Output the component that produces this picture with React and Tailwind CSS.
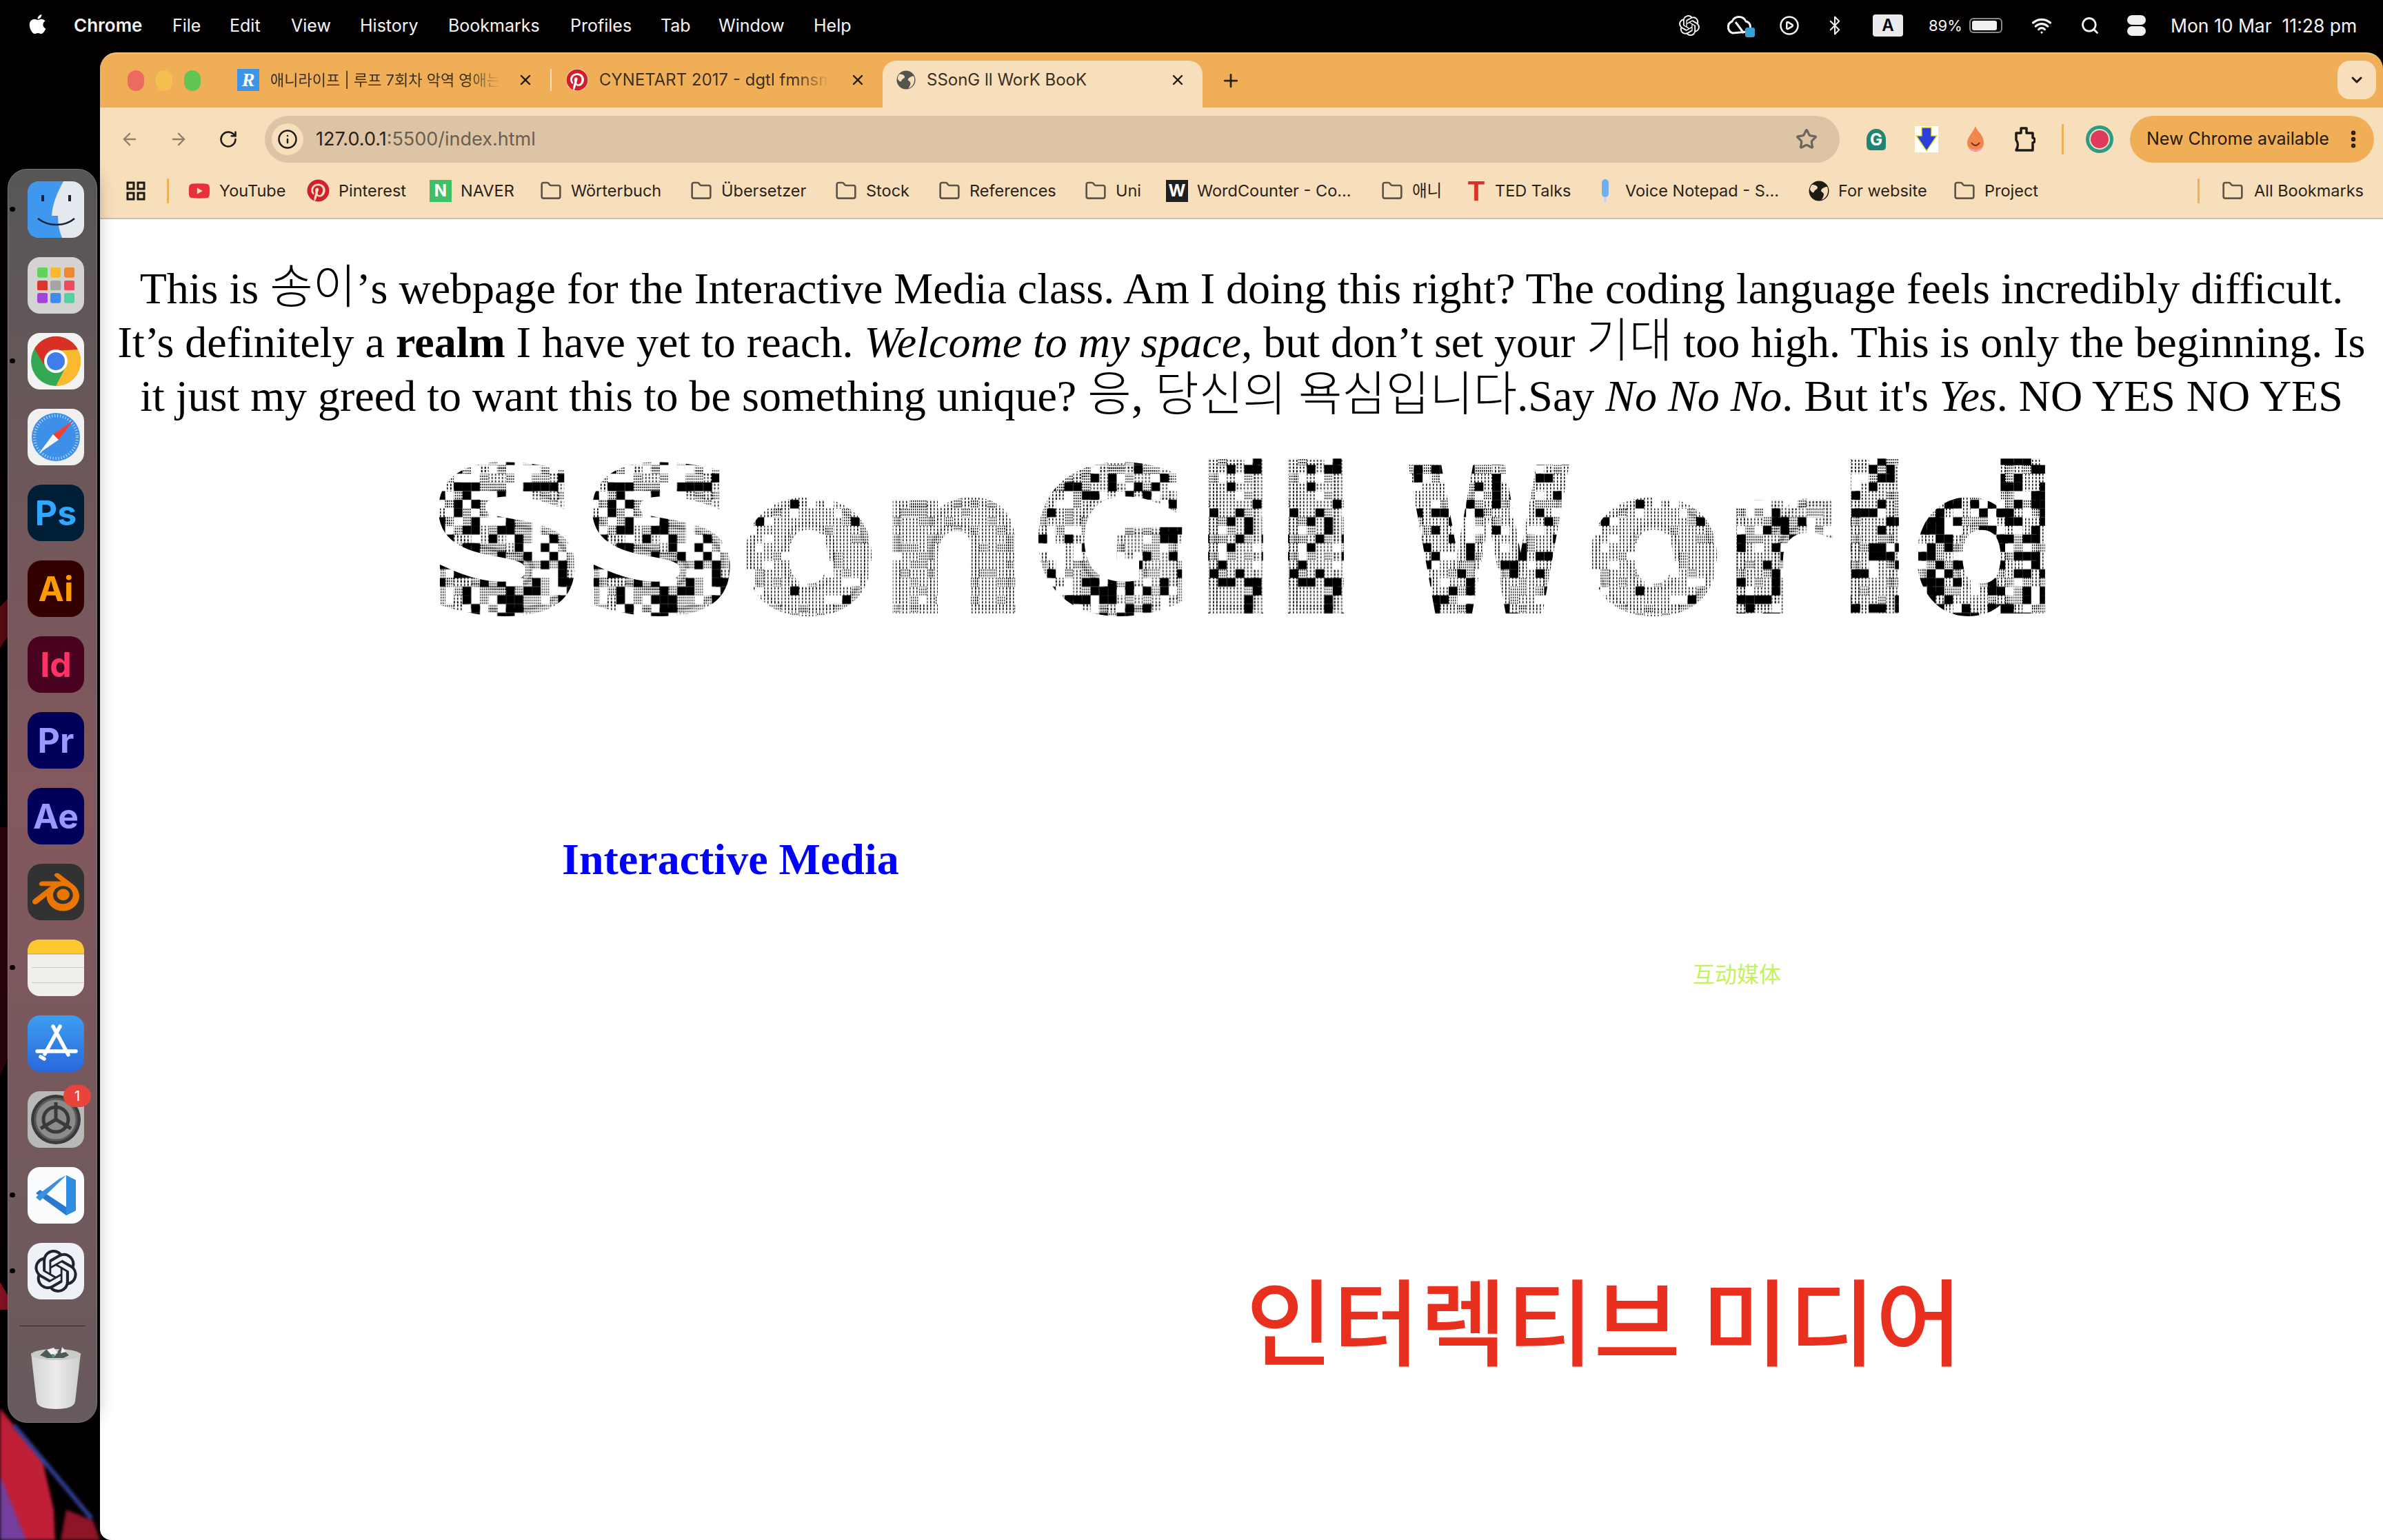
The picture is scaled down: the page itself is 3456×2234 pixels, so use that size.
import React from 'react';
import {
    ArrowLeft, ArrowRight, RotateCw, Info, Star, Plus, X, ChevronDown,
    EllipsisVertical, Folder, Search, Wifi, Bluetooth, CirclePlay
} from 'lucide-react';
import { FaApple, FaPinterest, FaYoutube } from 'react-icons/fa';
import { SiOpenai, SiBlender } from 'react-icons/si';

const LOGO_CELL = 12.6;
const LOGO_FONT = 280;
const LOGO_STROKE = 12;
const GLYPHS = {
    S: { adv: 0.72, from: 0.06, to: 0.66 },
    o: { adv: 0.687, from: 0.05, to: 0.637 },
    n: { adv: 0.712, from: 0.08, to: 0.637 },
    G: { adv: 0.821, from: 0.05, to: 0.75 },
    l: { adv: 0.343, from: 0.084, to: 0.259 },
    W: { adv: 1.103, from: 0.01, to: 1.09 },
    r: { adv: 0.493, from: 0.084, to: 0.5 },
    d: { adv: 0.716, from: 0.05, to: 0.63 },
};

// x, w are measured on the screenshot; mix = black, gray, dotted share of cells
const LOGO = [
    { ch: 'S', x: 488, w: 204, seed: 11, mix: [0.3, 0.32, 0.1] },
    { ch: 'S', x: 711, w: 206, seed: 11, mix: [0.3, 0.32, 0.1] },
    { ch: 'o', x: 938, w: 179, seed: 23, mix: [0.05, 0.14, 0.62] },
    { ch: 'n', x: 1149, w: 179, seed: 31, mix: [0, 0.25, 0.73] },
    { ch: 'G', x: 1361, w: 209, seed: 47, mix: [0.22, 0.2, 0.35] },
    { ch: 'l', x: 1609, w: 76, seed: 53, mix: [0.2, 0.18, 0.55] },
    { ch: 'l', x: 1725, w: 77, seed: 53, mix: [0.2, 0.18, 0.55] },
    { ch: 'W', x: 1893, w: 242, seed: 61, mix: [0.22, 0.16, 0.46] },
    { ch: 'o', x: 2164, w: 179, seed: 23, mix: [0.05, 0.14, 0.62] },
    { ch: 'r', x: 2374, w: 141, seed: 71, mix: [0.22, 0.2, 0.45] },
    { ch: 'l', x: 2540, w: 68, seed: 79, mix: [0.25, 0.2, 0.47] },
    { ch: 'd', x: 2637, w: 183, seed: 83, mix: [0.42, 0.16, 0.26] },
];

const logoCells = ({ seed, mix, w }) => {
    let s = seed * 7919;
    const next = () => {
        s = (s * 1664525 + 1013904223) % 4294967296;
        return s / 4294967296;
    };
    const cells = [];
    const cols = Math.ceil(w / LOGO_CELL);
    for (let row = 0; row < 19; row++) {
        for (let col = 0; col < cols; col++) {
            const r = next();
            const fill = r < mix[0] ? '#000' : r < mix[0] + mix[1] ? 'url(#logo-gray)' : r < mix[0] + mix[1] + mix[2] ? 'url(#logo-dots)' : null;
            if (fill) cells.push({ col, row, fill });
        }
    }
    return { cells, cols };
};

const Logo = () => (
    <svg className="block w-[3311px] h-[250px] mt-[48px]" viewBox="0 0 3311 250">
        <defs>
            <pattern id="logo-gray" width="3" height="4" patternUnits="userSpaceOnUse">
                <rect width="1.5" height="2" fill="#000" />
            </pattern>
            <pattern id="logo-dots" width="5" height="5" patternUnits="userSpaceOnUse">
                <rect width="1.5" height="3" fill="#000" />
            </pattern>
            {LOGO.map((l, i) => {
                const { cells, cols } = logoCells(l);
                return (
                    <pattern key={i} id={`logo-${i}`} x={l.x} y="0" width={cols * LOGO_CELL} height={19 * LOGO_CELL} patternUnits="userSpaceOnUse">
                        {cells.map((c) => (
                            <rect key={`${c.col}-${c.row}`} x={c.col * LOGO_CELL} y={c.row * LOGO_CELL} width={LOGO_CELL} height={LOGO_CELL} fill={c.fill} />
                        ))}
                    </pattern>
                );
            })}
        </defs>
        {LOGO.map((l, i) => {
            const g = GLYPHS[l.ch];
            const inner = l.w - LOGO_STROKE;
            const scale = inner / ((g.to - g.from) * LOGO_FONT);
            return (
                <text
                    key={i}
                    x={l.x + LOGO_STROKE / 2 - g.from * LOGO_FONT * scale}
                    y="222"
                    fontFamily="'DejaVu Sans', sans-serif"
                    fontWeight="700"
                    fontSize={LOGO_FONT}
                    textLength={g.adv * LOGO_FONT * scale}
                    lengthAdjust="spacingAndGlyphs"
                    fill={`url(#logo-${i})`}
                    stroke={`url(#logo-${i})`}
                    strokeWidth={LOGO_STROKE}
                >
                    {l.ch}
                </text>
            );
        })}
    </svg>
);

const Wallpaper = () => (
    <svg className="absolute inset-0 w-full h-full" viewBox="0 0 3456 2234">
        <rect width="3456" height="2234" fill="#030002" />
        <path d="M0 880 C10 870 20 860 34 850 L34 900 C20 910 10 925 0 940 Z" fill="#5a0c16" />
        <path d="M0 1200 L32 1200 L28 1500 L0 1560 Z" fill="#2c060c" />
        <path d="M0 1860 L12 1880 L12 1900 L0 1900 Z" fill="#8a1224" />
        <g className="blur-[2px]">
            <path d="M0 2043 L20 2067 L62 2120 L78 2190 L80 2234 L0 2234 Z" fill="#c01f38" />
            <path d="M88 2234 L96 2190 L135 2206 L145 2234 Z" fill="#8c1528" />
            <path d="M20 2067 L133 2203" stroke="#2f3f96" strokeWidth="6" />
            <path d="M0 2140 L38 2234 L0 2234 Z" fill="#743f9c" />
        </g>
    </svg>
);

const BrandIcon = ({ bg, color, children }) => (
    <div className={`w-[82px] h-[82px] rounded-[20px] flex items-center justify-center font-['Inter'] font-bold text-[50px] leading-none ${bg} ${color}`}>
        {children}
    </div>
);

const Finder = () => (
    <svg width="82" height="82" viewBox="0 0 82 82">
        <rect width="82" height="82" rx="18" fill="#e4e8ef" />
        <path d="M18 0 H52 C42 18 36 34 35 50 H44 C44 62 46 72 50 82 H18 Q0 82 0 64 V18 Q0 0 18 0Z" fill="#3f98ee" />
        <rect x="20" y="20" width="4" height="9" fill="#17233a" />
        <rect x="59" y="20" width="4" height="9" fill="#17233a" />
        <path d="M15 54 C30 66 54 66 68 54" stroke="#17233a" strokeWidth="2.5" fill="none" />
    </svg>
);

const Launchpad = () => {
    const dots = ['#5fd35b', '#f8b92f', '#ef8a2c', '#d9372d', '#a5a5a5', '#ef4a5f', '#a045d8', '#3f8cf0', '#4fd3a3'];
    return (
        <div className="w-[82px] h-[82px] rounded-[18px] bg-[#d5d3d1] grid grid-cols-3 gap-[4px] p-[14px] py-[15px]">
            {dots.map((c) => (
                <svg key={c} viewBox="0 0 16 14" preserveAspectRatio="none" className="w-full h-full">
                    <rect width="16" height="14" rx="3" fill={c} />
                </svg>
            ))}
        </div>
    );
};

const ChromeApp = () => (
    <svg width="82" height="82" viewBox="0 0 82 82">
        <rect width="82" height="82" rx="18" fill="#f2f2f2" />
        <ellipse cx="41" cy="41" rx="36" ry="36" fill="#34a853" />
        <path d="M41 5 A36 36 0 0 0 10 23 L23 45 L41 26 L73 24 A36 36 0 0 0 41 5Z" fill="#d93025" />
        <path d="M73 24 A36 36 0 0 1 41 77 L55 50 L41 26Z" fill="#f9bb2d" />
        <circle cx="41" cy="41" r="17" fill="#fff" />
        <circle cx="41" cy="41" r="13" fill="#3f7de8" />
    </svg>
);

const Safari = () => (
    <svg width="82" height="82" viewBox="0 0 82 82">
        <rect width="82" height="82" rx="18" fill="#f0f0f0" />
        <circle cx="41" cy="41" r="35" fill="#3d8fe8" />
        <circle cx="41" cy="41" r="31" fill="none" stroke="#cfe4fa" strokeWidth="4" strokeDasharray="1 3" />
        <path d="M66 17 L45 45 L37 37Z" fill="#ef4135" />
        <path d="M16 65 L37 37 L45 45Z" fill="#f5f5f5" />
    </svg>
);

const Notes = () => (
    <svg width="82" height="82" viewBox="0 0 82 82">
        <rect width="82" height="82" rx="18" fill="#f1efeb" />
        <path d="M0 20 V18 Q0 0 18 0 H64 Q82 0 82 18 V20Z" fill="#fbc92f" />
        <rect y="20" width="82" height="1.5" fill="#b5b0a4" />
        <rect x="6" y="40" width="76" height="1" fill="#cfcbc2" />
        <rect x="6" y="62" width="76" height="1" fill="#cfcbc2" />
    </svg>
);

const AppStore = () => (
    <svg width="82" height="82" viewBox="0 0 82 82">
        <defs>
            <linearGradient id="store-bg" x1="0" y1="0" x2="0" y2="1">
                <stop offset="0" stopColor="#3d9df0" />
                <stop offset="1" stopColor="#2a68dc" />
            </linearGradient>
        </defs>
        <rect width="82" height="82" rx="18" fill="url(#store-bg)" />
        <g stroke="#fff" strokeWidth="5.5" strokeLinecap="round" fill="none">
            <path d="M37 16 L59 57 M47 16 L25 56 M14 52 H70 M24 63 L19 60" />
        </g>
    </svg>
);

const Settings = () => (
    <div className="relative w-[82px] h-[82px]">
        <svg width="82" height="82" viewBox="0 0 82 82">
            <rect width="82" height="82" rx="18" fill="#b9b9b9" />
            <circle cx="41" cy="41" r="36" fill="#3a3a3a" />
            <circle cx="41" cy="41" r="30" fill="#8b8b8b" stroke="#5a5a5a" strokeWidth="3" />
            <circle cx="41" cy="41" r="18" fill="none" stroke="#3a3a3a" strokeWidth="5" />
            <path d="M41 41 V16 M41 41 L19 54 M41 41 L63 54" stroke="#3a3a3a" strokeWidth="5" />
        </svg>
        <span className="absolute -top-[9px] -right-[10px] w-[40px] h-[32px] rounded-full bg-[#e8443a] text-white text-[20px] font-['Inter'] flex items-center justify-center">1</span>
    </div>
);

const VSCode = () => (
    <svg width="82" height="82" viewBox="0 0 82 82">
        <rect width="82" height="82" rx="18" fill="#fbfcfe" />
        <path d="M56 12 L70 19 V63 L56 70 L12 38 L18 33 L56 58Z" fill="#2a79cf" />
        <path d="M56 12 L18 49 L12 44 L18 38 L46 17 Z" fill="#3b8fe0" />
        <path d="M56 12 L70 19 V63 L56 70Z" fill="#2f8ce0" />
    </svg>
);

const Trash = () => (
    <svg width="74" height="94" viewBox="0 0 74 94">
        <defs>
            <linearGradient id="trash-glass" x1="0" y1="0" x2="1" y2="0">
                <stop offset="0" stopColor="#d2d2d2" />
                <stop offset="0.5" stopColor="#ececec" />
                <stop offset="1" stopColor="#cdcdcd" />
            </linearGradient>
        </defs>
        <path d="M1 12 L73 12 L65 82 Q63 93 37 93 Q11 93 9 82Z" fill="url(#trash-glass)" />
        <ellipse cx="37" cy="14" rx="36" ry="8" fill="#c8cbc8" />
        <path d="M14 15 L24 6 L36 16 L44 3 L56 15 L48 19 L24 19Z" fill="#4e5a55" />
        <path d="M24 7 L34 4 L40 12 L30 14Z M46 3 L52 10 L44 12Z" fill="#f0f0f0" />
        <path d="M30 14 L36 16 L33 19Z" fill="#3fa088" />
    </svg>
);

const Earth = ({ className }) => (
    <svg className={className} viewBox="0 0 30 30">
        <circle cx="15" cy="15" r="14.5" fill="currentColor" />
        <path d="M5 6 C9 6 12 7 13 10 C13 13 9 13 8 16 C7 19 4 17 2 13 C2 10 3 8 5 6Z" fill="#f8dfbb" />
        <path d="M27 9 C24 9 19 11 18 14 C18 17 22 17 22 20 C22 23 20 25 19 28 C24 26 28 21 28 15 C28 13 28 11 27 9Z" fill="#f8dfbb" />
    </svg>
);

const DOCK = [
    { name: 'finder', icon: <Finder />, running: true },
    { name: 'launchpad', icon: <Launchpad /> },
    { name: 'chrome', icon: <ChromeApp />, running: true },
    { name: 'safari', icon: <Safari /> },
    { name: 'ps', icon: <BrandIcon bg="bg-[#001e36]" color="text-[#31a8ff]">Ps</BrandIcon> },
    { name: 'ai', icon: <BrandIcon bg="bg-[#330000]" color="text-[#ff9a00]">Ai</BrandIcon> },
    { name: 'id', icon: <BrandIcon bg="bg-[#49021f]" color="text-[#ff3366]">Id</BrandIcon> },
    { name: 'pr', icon: <BrandIcon bg="bg-[#00005b]" color="text-[#9999ff]">Pr</BrandIcon> },
    { name: 'ae', icon: <BrandIcon bg="bg-[#00005b]" color="text-[#9999ff]">Ae</BrandIcon> },
    { name: 'blender', icon: <BrandIcon bg="bg-[#323232]" color="text-[#ea7600]"><SiBlender className="w-[68px] h-[68px]" /></BrandIcon> },
    { name: 'notes', icon: <Notes />, running: true },
    { name: 'store', icon: <AppStore /> },
    { name: 'settings', icon: <Settings /> },
    { name: 'vscode', icon: <VSCode />, running: true },
    { name: 'gpt', icon: <BrandIcon bg="bg-[#eef1f6]" color="text-[#1f2430]"><SiOpenai className="w-[62px] h-[62px]" /></BrandIcon>, running: true },
];

const Dock = () => (
    <aside className="relative z-10 w-[145px] shrink-0 pt-[169px] pl-[11px]">
        <div className="relative w-[130px] h-[1819px] rounded-[28px] border border-[#7d7578] bg-gradient-to-b from-[#565656] via-[#84585e] to-[#665a5c] shadow-[0_0_24px_rgba(0,0,0,0.3)] flex flex-col items-center pl-[10px] pt-[17px] gap-[28px]">
            {DOCK.map(({ name, icon, running }) => (
                <div key={name} className="relative">
                    {icon}
                    {running && <span className="absolute left-[-26px] top-[37px] w-[8px] h-[7px] rounded-full bg-black" />}
                </div>
            ))}
            <div className="w-[96px] h-[1px] bg-[#4a1a20] mt-[10px] -ml-[10px] -mb-[1px]" />
            <Trash />
        </div>
    </aside>
);

const MenuBar = () => (
    <header className="relative z-10 h-[76px] flex items-start pt-[22px] text-[#f4f4f4] font-['Inter'] text-[25px] leading-[30px]">
        <FaApple className="ml-[40px] w-[29px] h-[32px] -mt-[3px] text-white" />
        <span className="ml-[38px] w-[143px] text-[26px] font-semibold">Chrome</span>
        <nav className="flex">
            <span className="w-[83px]">File</span>
            <span className="w-[89px]">Edit</span>
            <span className="w-[100px]">View</span>
            <span className="w-[128px]">History</span>
            <span className="w-[177px]">Bookmarks</span>
            <span className="w-[131px]">Profiles</span>
            <span className="w-[84px]">Tab</span>
            <span className="w-[138px]">Window</span>
            <span>Help</span>
        </nav>
        <div className="ml-auto flex items-center h-[30px]">
            <SiOpenai className="w-[30px] h-[30px] mr-[38px]" />
            <div className="relative w-[40px] mr-[37px]">
                <svg width="40" height="30" viewBox="0 0 40 30" fill="none" stroke="#f4f4f4" strokeWidth="3">
                    <path d="M10 26 A9 9 0 0 1 9 9 A11 11 0 0 1 29 9 A8 8 0 0 1 31 24 Z" />
                    <path d="M14 10 L26 26" />
                </svg>
                <span className="absolute right-[-2px] bottom-[-2px] w-[14px] h-[14px] bg-[#3aa0d8] rounded-[3px]" />
            </div>
            <CirclePlay className="w-[30px] h-[30px] mr-[36px]" strokeWidth={2} />
            <Bluetooth className="w-[30px] h-[30px] mr-[40px]" strokeWidth={1.6} />
            <span className="w-[44px] h-[32px] rounded-[4px] bg-[#ebebef] text-black font-semibold text-[24px] flex items-center justify-center mr-[37px]">A</span>
            <span className="w-[59px] text-[22px]">89%</span>
            <span className="relative w-[48px] h-[22px] rounded-[6px] border-2 border-[#8a8a8a] p-[2px] mr-[40px]">
                <span className="block w-[36px] h-full rounded-[3px] bg-[#f0f0f0]" />
            </span>
            <Wifi className="w-[34px] h-[30px] mr-[39px]" strokeWidth={2.6} />
            <Search className="w-[28px] h-[28px] mr-[40px]" strokeWidth={2.4} />
            <span className="flex flex-col gap-[2px] mr-[36px]">
                <span className="w-[27px] h-[14px] rounded-full bg-[#f0f0f0]" />
                <span className="w-[27px] h-[14px] rounded-full bg-[#f0f0f0]" />
            </span>
            <span className="w-[274px] mr-[34px] text-[26.5px] whitespace-pre">Mon 10 Mar  11:28 pm</span>
        </div>
    </header>
);

const Tab = ({ icon, title, width, active, fade, textSize = 'text-[24px]' }) => (
    <div className={`relative h-[68px] flex items-center shrink-0 pb-[12px] ${width} ${active ? 'bg-[#f8dfbb] rounded-t-[20px]' : ''}`}>
        {icon}
        <span className={`ml-[16px] whitespace-nowrap overflow-hidden text-[#3a2f20] ${textSize} ${fade ? 'w-[334px] [mask-image:linear-gradient(to_right,black_85%,transparent)]' : 'w-[358px]'}`}>
            {title}
        </span>
        <X className="absolute right-[24px] top-[16px] w-[24px] h-[24px] text-[#1e1a14]" strokeWidth={2.4} />
    </div>
);

const TabStrip = () => (
    <div className="h-[80px] bg-[#f0ae56] border-t-2 border-[#f7c27c] rounded-tl-[24px] rounded-tr-[24px] flex pt-[10px] shrink-0">
        <div className="flex items-center gap-[17px] pl-[40px] w-[181px] h-[58px] shrink-0">
            <span className="w-[24px] h-[30px] rounded-full bg-[#ec6a5e]" />
            <span className="w-[24px] h-[30px] rounded-full bg-[#f4bf4f]" />
            <span className="w-[24px] h-[30px] rounded-full bg-[#61c554]" />
        </div>
        <Tab
            width="w-[472px] pl-[18px]"
            fade
            textSize="text-[22px]"
            icon={<span className="w-[32px] h-[32px] shrink-0 bg-[#3d95e8] text-white italic font-['Liberation_Serif'] font-bold text-[28px] flex items-center justify-center">R</span>}
            title="애니라이프 | 루프 7회차 악역 영애는 다시 시작"
        />
        <span className="w-[2px] h-[32px] mt-[12px] bg-[#f8dfbb]" />
        <Tab
            width="w-[480px] pl-[21px]"
            fade
            icon={<FaPinterest className="w-[32px] h-[32px] shrink-0 text-[#d11f2b] bg-white rounded-full" />}
            title="CYNETART 2017 - dgtl fmnsm and more"
        />
        <Tab
            width="w-[464px] pl-[20px]"
            active
            icon={<Earth className="w-[28px] h-[28px] shrink-0 text-[#55544f]" />}
            title="SSonG ll WorK BooK"
        />
        <Plus className="ml-[26px] mt-[14px] w-[30px] h-[30px] text-[#2a2014]" strokeWidth={2.2} />
        <div className="ml-auto mr-[10px] w-[56px] h-[56px] rounded-[18px] bg-[#f8dfbb] flex items-center justify-center">
            <ChevronDown className="w-[24px] h-[24px] text-[#1e1a14]" strokeWidth={3} />
        </div>
    </div>
);

const Toolbar = () => (
    <div className="h-[84px] bg-[#f8dfbb] flex items-center shrink-0 pt-[8px] font-['Inter']">
        <ArrowLeft className="ml-[29px] w-[28px] h-[28px] text-[#8d7f6c]" strokeWidth={2} />
        <ArrowRight className="ml-[43px] w-[28px] h-[28px] text-[#8d7f6c]" strokeWidth={2} />
        <RotateCw className="ml-[44px] w-[28px] h-[28px] text-[#1e1a14]" strokeWidth={2.2} />
        <div className="ml-[39px] w-[2284px] h-[68px] rounded-full bg-[#ddc4a5] flex items-center pl-[10px] pr-[32px]">
            <span className="w-[46px] h-[46px] rounded-full bg-[#f8dfbb] flex items-center justify-center">
                <Info className="w-[30px] h-[30px] text-[#1e1a14]" strokeWidth={2} />
            </span>
            <span className="ml-[18px] text-[27px] text-[#2a2218]">127.0.0.1<span className="text-[#6a5f50]">:5500/index.html</span></span>
            <Star className="ml-auto w-[32px] h-[32px] text-[#6b655c]" strokeWidth={2.4} />
        </div>
        <svg className="ml-[37px]" width="32" height="36" viewBox="0 0 32 36">
            <path d="M2 18 A14 15 0 0 1 30 18 V29 Q30 34 24 34 H8 Q2 34 2 26Z" fill="#1f8570" />
            <text x="16" y="27" textAnchor="middle" fontFamily="Inter" fontWeight="700" fontSize="24" fill="#fff">G</text>
        </svg>
        <svg className="ml-[40px]" width="34" height="38" viewBox="0 0 34 38">
            <rect width="34" height="38" fill="#fff" />
            <path d="M10 2 H24 V14 H32 L17 36 L2 14 H10Z" fill="#2b3fd8" stroke="#e8e020" strokeWidth="1.5" />
        </svg>
        <svg className="ml-[40px]" width="28" height="38" viewBox="0 0 28 38">
            <path d="M14 0 C16 8 26 12 26 24 A12 13 0 0 1 2 24 C2 16 10 10 14 0Z" fill="#f0864a" />
            <path d="M3 28 A12 10 0 0 0 25 28 L20 36 H8Z" fill="#eea0b8" />
            <path d="M8 24 Q14 32 20 24" stroke="#7a2a20" strokeWidth="2" fill="none" />
        </svg>
        <svg className="ml-[41px]" width="32" height="38" viewBox="0 0 32 38" fill="none" stroke="#1e1a14" strokeWidth="3.5" strokeLinejoin="round">
            <path d="M4 10 H11 V3 H19 V10 H28 V17 C32 17 32 24 28 24 V35 H4 C7 30 7 24 4 20 Z" />
        </svg>
        <span className="ml-[38px] w-[3px] h-[44px] bg-[#f0ae56]" />
        <svg className="ml-[32px]" width="40" height="40" viewBox="0 0 40 40">
            <circle cx="20" cy="20" r="20" fill="#2e9a83" />
            <circle cx="20" cy="20" r="15" fill="#dbe8c8" />
            <circle cx="20" cy="20" r="13" fill="#e03a5c" />
        </svg>
        <div className="ml-[24px] w-[354px] h-[68px] rounded-full bg-[#f0ae56] flex items-center pl-[24px] text-[25px] text-[#241a0c]">
            <span className="whitespace-nowrap">New Chrome available</span>
            <EllipsisVertical className="ml-auto mr-[14px] w-[32px] h-[32px] text-[#241a0c]" strokeWidth={2.8} />
        </div>
    </div>
);

const folderIcon = <Folder className="w-[32px] h-[32px] shrink-0 text-[#5e5548]" strokeWidth={2} />;
const blockIcon = (bg, letter, color = 'text-white') => (
    <span className={`w-[32px] h-[32px] shrink-0 flex items-center justify-center font-bold text-[24px] ${bg} ${color}`}>{letter}</span>
);

const BOOKMARKS = [
    { label: 'YouTube', width: 'w-[172px]', icon: <FaYoutube className="w-[32px] h-[32px] shrink-0 text-[#e8303c]" /> },
    { label: 'Pinterest', width: 'w-[178px]', icon: <FaPinterest className="w-[33px] h-[33px] shrink-0 text-[#d11f2b]" /> },
    { label: 'NAVER', width: 'w-[160px]', icon: blockIcon('bg-[#3fbf66]', 'N') },
    { label: 'Wörterbuch', width: 'w-[218px]', icon: folderIcon },
    { label: 'Übersetzer', width: 'w-[210px]', icon: folderIcon },
    { label: 'Stock', width: 'w-[150px]', icon: folderIcon },
    { label: 'References', width: 'w-[212px]', icon: folderIcon },
    { label: 'Uni', width: 'w-[118px]', icon: folderIcon },
    { label: 'WordCounter - Co...', width: 'w-[312px]', icon: blockIcon('bg-[#1f1f1f]', 'W') },
    { label: '애니', width: 'w-[124px]', icon: folderIcon },
    { label: 'TED Talks', width: 'w-[185px]', icon: <span className="w-[28px] h-[32px] shrink-0 flex items-center justify-center text-[#d8322a] font-bold text-[40px] font-['Liberation_Sans']">T</span> },
    {
        label: 'Voice Notepad - S...',
        width: 'w-[311px]',
        icon: (
            <svg className="shrink-0" width="32" height="34" viewBox="0 0 32 34">
                <rect x="11" y="0" width="10" height="26" rx="5" fill="#6eaef5" />
                <rect x="14" y="26" width="4" height="8" fill="#c3d8ef" />
            </svg>
        ),
    },
    { label: 'For website', width: 'w-[210px]', icon: <Earth className="w-[30px] h-[30px] shrink-0 text-[#1e1a14]" /> },
    { label: 'Project', width: '', icon: folderIcon },
];

const BookmarkBar = () => (
    <div className="h-[78px] pb-[3px] bg-[#f8dfbb] border-b-2 border-[#cfc0aa] flex items-center shrink-0 font-['Inter','Noto_Sans_CJK_KR',sans-serif] text-[23.5px] text-[#2a2218]">
        <svg className="ml-[38px]" width="28" height="28" viewBox="0 0 28 28" fill="none" stroke="#1e1a14" strokeWidth="3">
            <rect x="2" y="2" width="9" height="9" />
            <rect x="17" y="2" width="9" height="9" />
            <rect x="2" y="17" width="9" height="9" />
            <rect x="17" y="17" width="9" height="9" />
        </svg>
        <span className="ml-[31px] mr-[28px] w-[3px] h-[36px] bg-[#f0ae56]" />
        {BOOKMARKS.map(({ label, width, icon }) => (
            <div key={label} className={`flex items-center gap-[13px] shrink-0 whitespace-nowrap ${width}`}>
                {icon}
                <span>{label}</span>
            </div>
        ))}
        <span className="ml-auto w-[3px] h-[36px] bg-[#f0ae56]" />
        <div className="ml-[32px] mr-[28px] flex items-center gap-[15px] whitespace-nowrap">
            {folderIcon}
            <span>All Bookmarks</span>
        </div>
    </div>
);

const Page = () => (
    <main className="flex-1 bg-white rounded-bl-[16px] overflow-hidden font-['Liberation_Serif','Noto_Sans_CJK_KR',serif] text-black">
        <p className="pt-[62px] text-center text-[64px] leading-[78px] whitespace-nowrap">
            This is <span className="font-light text-[68px] leading-none">송이</span>’s webpage for the Interactive Media class. Am I doing this right? The coding language feels incredibly difficult.
            <br />
            It’s definitely a <b>realm</b> I have yet to reach. <i>Welcome to my space</i>, but don’t set your <span className="font-light text-[68px] leading-none">기대</span> too high. This is only the beginning. Is
            <br />
            it just my greed to want this to be something unique? <span className="font-light text-[69px] leading-none">응, 당신의 욕심입니다</span>.Say <i>No No No</i>. But it's <i>Yes</i>. NO YES NO YES
        </p>
        <Logo />
        <h2 className="mt-[298px] ml-[670px] text-[64px] leading-[74px] font-bold text-[#0000ff]">Interactive Media</h2>
        <p className="mt-[107px] ml-[2310px] text-[32px] leading-[40px] font-['Noto_Sans_CJK_SC',sans-serif] text-[#c4f25a]">互动媒体</p>
        <p className="mt-[400px] ml-[1662px] text-[137px] leading-[160px] font-medium font-['Noto_Sans_CJK_KR',sans-serif] text-[#e9301f] whitespace-nowrap">인터렉티브 미디어</p>
    </main>
);

export default function App() {
    return (
        <div className="relative w-[3456px] h-[2234px] overflow-hidden bg-black">
            <Wallpaper />
            <div className="relative flex flex-col h-full">
                <MenuBar />
                <div className="flex flex-1 min-h-0">
                    <Dock />
                    <section className="flex-1 flex flex-col min-w-0 font-['Inter','Noto_Sans_CJK_KR',sans-serif]">
                        <TabStrip />
                        <Toolbar />
                        <BookmarkBar />
                        <Page />
                    </section>
                </div>
            </div>
        </div>
    );
}
